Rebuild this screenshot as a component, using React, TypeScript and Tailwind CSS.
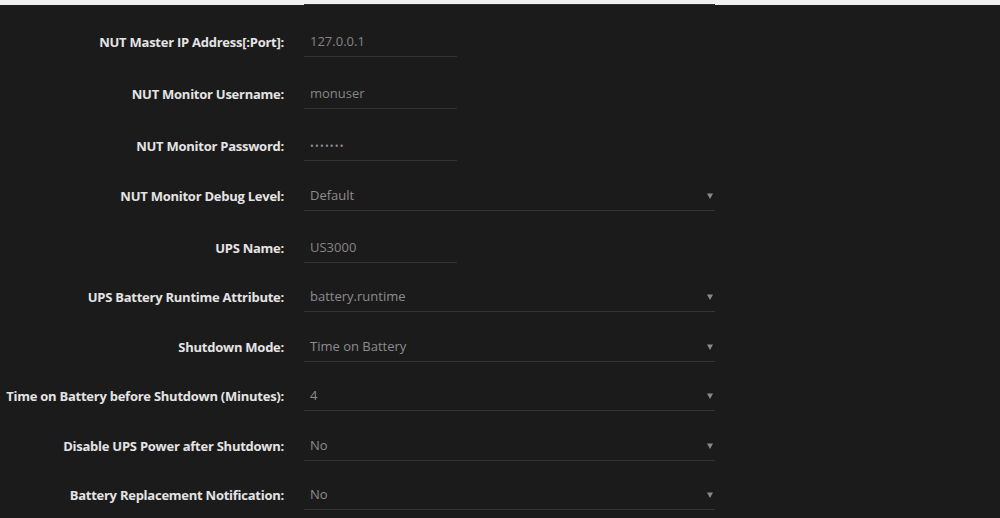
const rows: { label: string; value: string; kind: 'text' | 'password' | 'select' }[] = [
  { label: 'NUT Master IP Address[:Port]:', value: '127.0.0.1', kind: 'text' },
  { label: 'NUT Monitor Username:', value: 'monuser', kind: 'text' },
  { label: 'NUT Monitor Password:', value: '•••••••', kind: 'password' },
  { label: 'NUT Monitor Debug Level:', value: 'Default', kind: 'select' },
  { label: 'UPS Name:', value: 'US3000', kind: 'text' },
  { label: 'UPS Battery Runtime Attribute:', value: 'battery.runtime', kind: 'select' },
  { label: 'Shutdown Mode:', value: 'Time on Battery', kind: 'select' },
  { label: 'Time on Battery before Shutdown (Minutes):', value: '4', kind: 'select' },
  { label: 'Disable UPS Power after Shutdown:', value: 'No', kind: 'select' },
  { label: 'Battery Replacement Notification:', value: 'No', kind: 'select' },
];

const Caret = () => (
  <svg width="6" height="6" viewBox="0 0 6 6" className="mr-[2px]">
    <path d="M0 0.5 H6 L3 6 Z" fill="#8a8a8a" />
  </svg>
);

export default function App() {
  return (
    <div className="w-[1000px] h-[518px] overflow-hidden bg-[#1c1b1c] font-['Open_Sans',sans-serif] text-[13px]">
      <div className="h-[4px] bg-[#f0f0f0]" />
      <div className="flex h-[1px] bg-[#f0f0f0]">
        <div className="w-[304px]" />
        <div className="w-[411px] bg-[#2e2e2e]" />
      </div>
      {rows.map((r, i) => (
        <div
          key={i}
          className={`grid grid-cols-[284px_1fr] gap-x-[20px] items-end ${r.kind === 'select' ? 'h-[49.5px]' : 'h-[52px]'}`}
        >
          <div className="text-right font-bold text-[#e4e4e4] leading-[28px] pb-[1px] whitespace-nowrap tracking-[-0.25px]">
            {r.label}
          </div>
          {r.kind === 'select' ? (
            <div className="w-[411px] h-[29px] border-b border-[#333333] flex items-center justify-between pl-[6px] text-[#8c8c8c]">
              <span>{r.value}</span>
              <Caret />
            </div>
          ) : (
            <div className="w-[153px] h-[29px] border-b border-[#333333] flex items-center pl-[6px] text-[#858585]">
              {r.kind === 'password' ? (
                <span className="text-[10px] tracking-[1.2px] text-[#8f8f8f]">{r.value}</span>
              ) : (
                <span>{r.value}</span>
              )}
            </div>
          )}
        </div>
      ))}
    </div>
  );
}
